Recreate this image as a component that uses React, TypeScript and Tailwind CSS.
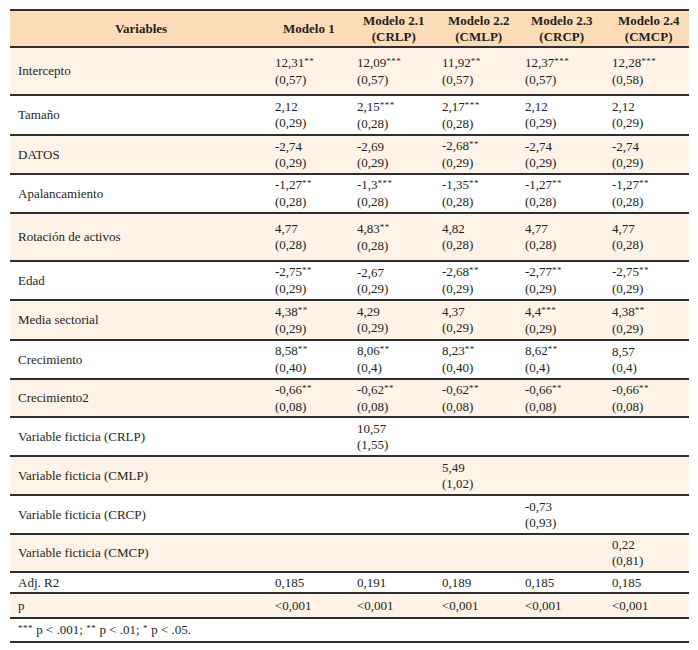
import React from "react";

type Cell = { v: string; s?: string; e?: string } | null;

const F = { fontFamily: '"Liberation Serif", "Times New Roman", serif' };

const rows: { name: string; h: string; bg: boolean; cells: Cell[] }[] = [
  { name: "Intercepto", h: "h-[48px]", bg: true, cells: [
    { v: "12,31", s: "**", e: "(0,57)" }, { v: "12,09", s: "***", e: "(0,57)" }, { v: "11,92", s: "**", e: "(0,57)" }, { v: "12,37", s: "***", e: "(0,57)" }, { v: "12,28", s: "***", e: "(0,58)" } ] },
  { name: "Tamaño", h: "h-[40px]", bg: false, cells: [
    { v: "2,12", e: "(0,29)" }, { v: "2,15", s: "***", e: "(0,28)" }, { v: "2,17", s: "***", e: "(0,28)" }, { v: "2,12", e: "(0,29)" }, { v: "2,12", e: "(0,29)" } ] },
  { name: "DATOS", h: "h-[39px]", bg: true, cells: [
    { v: "-2,74", e: "(0,29)" }, { v: "-2,69", e: "(0,29)" }, { v: "-2,68", s: "**", e: "(0,29)" }, { v: "-2,74", e: "(0,29)" }, { v: "-2,74", e: "(0,29)" } ] },
  { name: "Apalancamiento", h: "h-[39px]", bg: false, cells: [
    { v: "-1,27", s: "**", e: "(0,28)" }, { v: "-1,3", s: "***", e: "(0,28)" }, { v: "-1,35", s: "**", e: "(0,28)" }, { v: "-1,27", s: "**", e: "(0,28)" }, { v: "-1,27", s: "**", e: "(0,28)" } ] },
  { name: "Rotación de activos", h: "h-[48px]", bg: true, cells: [
    { v: "4,77", e: "(0,28)" }, { v: "4,83", s: "**", e: "(0,28)" }, { v: "4,82", e: "(0,28)" }, { v: "4,77", e: "(0,28)" }, { v: "4,77", e: "(0,28)" } ] },
  { name: "Edad", h: "h-[39px]", bg: false, cells: [
    { v: "-2,75", s: "**", e: "(0,29)" }, { v: "-2,67", e: "(0,29)" }, { v: "-2,68", s: "**", e: "(0,29)" }, { v: "-2,77", s: "**", e: "(0,29)" }, { v: "-2,75", s: "**", e: "(0,29)" } ] },
  { name: "Media sectorial", h: "h-[40px]", bg: true, cells: [
    { v: "4,38", s: "**", e: "(0,29)" }, { v: "4,29", e: "(0,29)" }, { v: "4,37", e: "(0,29)" }, { v: "4,4", s: "***", e: "(0,29)" }, { v: "4,38", s: "**", e: "(0,29)" } ] },
  { name: "Crecimiento", h: "h-[39px]", bg: false, cells: [
    { v: "8,58", s: "**", e: "(0,40)" }, { v: "8,06", s: "**", e: "(0,4)" }, { v: "8,23", s: "**", e: "(0,40)" }, { v: "8,62", s: "**", e: "(0,4)" }, { v: "8,57", e: "(0,4)" } ] },
  { name: "Crecimiento2", h: "h-[38px]", bg: true, cells: [
    { v: "-0,66", s: "**", e: "(0,08)" }, { v: "-0,62", s: "**", e: "(0,08)" }, { v: "-0,62", s: "**", e: "(0,08)" }, { v: "-0,66", s: "**", e: "(0,08)" }, { v: "-0,66", s: "**", e: "(0,08)" } ] },
  { name: "Variable ficticia (CRLP)", h: "h-[39px]", bg: false, cells: [null, { v: "10,57", e: "(1,55)" }, null, null, null] },
  { name: "Variable ficticia (CMLP)", h: "h-[39px]", bg: true, cells: [null, null, { v: "5,49", e: "(1,02)" }, null, null] },
  { name: "Variable ficticia (CRCP)", h: "h-[39px]", bg: false, cells: [null, null, null, { v: "-0,73", e: "(0,93)" }, null] },
  { name: "Variable ficticia (CMCP)", h: "h-[38px]", bg: true, cells: [null, null, null, null, { v: "0,22", e: "(0,81)" }] },
  { name: "Adj. R2", h: "h-[21px]", bg: false, cells: [{ v: "0,185" }, { v: "0,191" }, { v: "0,189" }, { v: "0,185" }, { v: "0,185" }] },
  { name: "p", h: "h-[25px]", bg: true, cells: [{ v: "<0,001" }, { v: "<0,001" }, { v: "<0,001" }, { v: "<0,001" }, { v: "<0,001" }] },
];

const grid = "grid grid-cols-[262px_82px_85px_83px_87px_1fr]";

function Star({ s }: { s?: string }) {
  if (!s) return null;
  return <span className="relative -top-[3px] text-[9px] tracking-[0.5px]">{s}</span>;
}

function Val({ c }: { c: Cell }) {
  if (!c) return <div />;
  return (
    <div className="flex flex-col justify-center pl-[3px]">
      <div>
        {c.v}
        <Star s={c.s} />
      </div>
      {c.e && <div>{c.e}</div>}
    </div>
  );
}

export default function App() {
  return (
    <div className="w-[698px] h-[650px] bg-white text-[13px] leading-[16px] text-[#231f20]" style={F}>
      <div className="h-[9px] overflow-hidden pl-[8px]">
        <div className="-mt-[14px] leading-[13px] font-bold whitespace-nowrap">Tabla 4. Modelos regresión</div>
      </div>
      <div className="ml-[10px] w-[679px] border-t-2 border-[#2f2f2f]">
        <div className={`${grid} h-[37px] bg-[#fbdcb7] border-b-2 border-[#2f2f2f] font-bold items-center box-border`}>
          <div className="text-center">Variables</div>
          <div className="pl-[11px]">Modelo 1</div>
          {[["2.1", "CRLP"], ["2.2", "CMLP"], ["2.3", "CRCP"], ["2.4", "CMCP"]].map(([m, c]) => (
            <div key={m} className="pl-[9px]">
              <div className="inline-block text-center">
                <div>Modelo {m}</div>
                <div>({c})</div>
              </div>
            </div>
          ))}
        </div>
        {rows.map((r) => (
          <div
            key={r.name}
            className={`${grid} ${r.h} ${r.bg ? "bg-[#fef3e6]" : "bg-white"} border-b-2 border-[#2f2f2f] box-border`}
          >
            <div className="flex items-center pl-[8px]">{r.name}</div>
            {r.cells.map((c, i) => (
              <Val key={i} c={c} />
            ))}
          </div>
        ))}
        <div className="h-[24px] flex items-center pl-[8px] border-b-2 border-[#2f2f2f] box-border">
          <span>
            <Star s="***" /> p &lt; .001; <Star s="**" /> p &lt; .01; <Star s="*" /> p &lt; .05.
          </span>
        </div>
      </div>
    </div>
  );
}
